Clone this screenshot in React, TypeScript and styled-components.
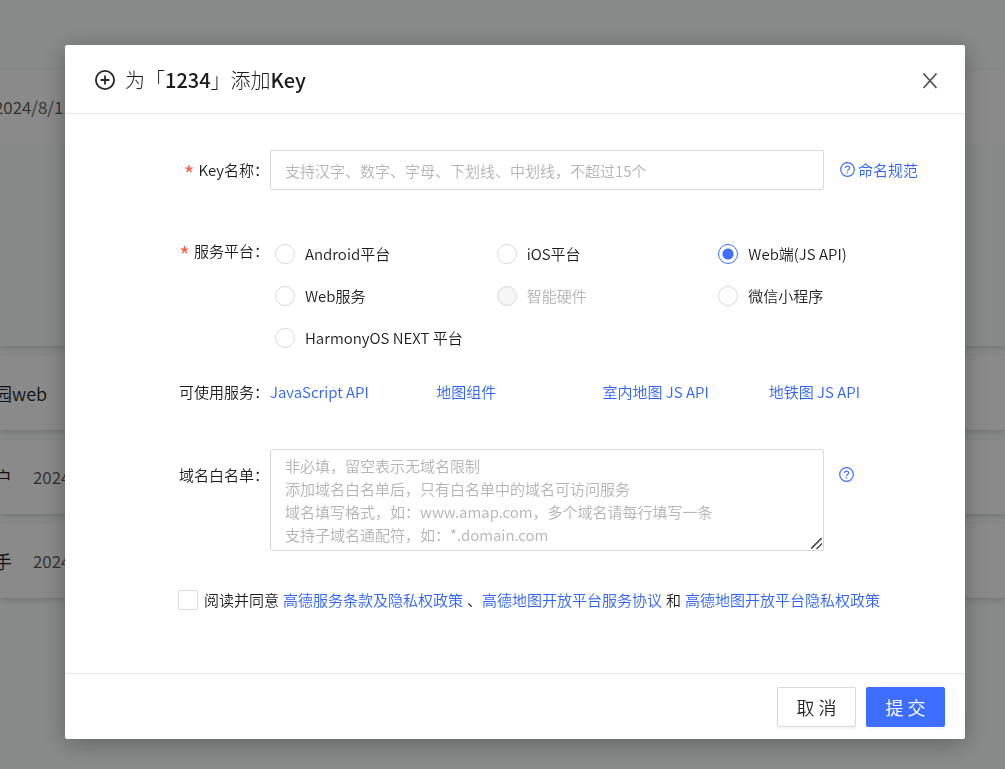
import React from "react";
import styled, { createGlobalStyle, css } from "styled-components";

const Global = createGlobalStyle`
  *, *::before, *::after { box-sizing: border-box; }
  html, body, #root { height: 100%; }
  body {
    margin: 0;
    overflow: hidden;
    font-family: "Noto Sans CJK SC", "Noto Sans", sans-serif;
    font-size: 15px;
    font-weight: 350;
    line-height: 22px;
    color: #1c1c1c;
    background: #f8fcfa;
  }
`;

const Page = styled.main`
  height: 100%;
  min-height: 768px;
  padding-top: 70px;
  overflow: hidden;
  display: flex;
  flex-direction: column;
  gap: 10px;
`;

const Card = styled.section`
  background: #fdfbfb;
  box-shadow: 0 2px 6px rgba(0, 0, 0, 0.16);
`;

const CardHead = styled.div`
  height: 74px;
  margin-left: -6px;
  display: flex;
  align-items: center;
  gap: 21px;
`;

const CardDetail = styled.div`
  height: 202px;
  background: #f4f9f7;
`;

const AppName = styled.span`
  font-size: 18px;
  color: #222;
`;

const AppDate = styled.span`
  font-size: 17px;
  color: #555;
`;

const Overlay = styled.div`
  position: fixed;
  inset: 0;
  padding: 45px 40px 30px 65px;
  background: rgba(0, 0, 0, 0.45);
  overflow: hidden;
`;

const Dialog = styled.div`
  background: #fff;
  border-radius: 2px;
  box-shadow: 0 4px 24px rgba(0, 0, 0, 0.3);
`;

const DialogHeader = styled.header`
  display: flex;
  align-items: center;
  height: 69px;
  padding: 2px 24px 0 29px;
  border-bottom: 1px solid #e8e8e8;
`;

const Title = styled.h2`
  flex: 1;
  margin: 0 0 0 9px;
  font-size: 20px;
  line-height: 28px;
  font-weight: 300;
`;

const Strong = styled.b`
  font-weight: 500;
`;

const CloseButton = styled.button`
  display: flex;
  padding: 0;
  border: 0;
  background: none;
  color: #555;
  cursor: pointer;
`;

const Form = styled.form`
  margin: 0;
`;

const Fields = styled.div`
  padding: 36px 0 62px;
`;

const Row = styled.div<{ $gap: number }>`
  display: grid;
  grid-template-columns: 205px minmax(0, 1fr) 141px;
  margin-bottom: ${(p) => p.$gap}px;
`;

const labelText = css<{ $top?: number }>`
  padding: ${(p) => p.$top ?? 0}px 1px 0 0;
  text-align: right;
`;

const Label = styled.label<{ $top?: number }>`
  ${labelText}
`;

const GroupLabel = styled.span<{ $top?: number }>`
  ${labelText}
`;

const Required = styled.span`
  margin-right: 4px;
  color: #ff5a3c;
  font-size: 24px;
  line-height: 16px;
  vertical-align: -8px;
`;

const field = css`
  display: block;
  width: 100%;
  border: 1px solid #d9d9d9;
  border-radius: 2px;
  background: #fff;
  font: inherit;
  color: inherit;
  &::placeholder {
    color: #b4b4b4;
    opacity: 1;
  }
`;

const TextInput = styled.input`
  ${field}
  height: 40px;
  padding: 0 14px;
`;

const TextArea = styled.textarea`
  ${field}
  height: 102px;
  padding: 4px 14px;
  line-height: 23px;
  overflow: hidden;
  &::-webkit-resizer {
    background: linear-gradient(
        135deg,
        transparent 44%,
        #555 45%,
        #555 54%,
        transparent 55%,
        transparent 70%,
        #555 71%,
        #555 80%,
        transparent 81%
      )
      3px 3px / 11px 11px no-repeat;
  }
`;

const Link = styled.a`
  color: #2f63ff;
  text-decoration: none;
`;

const HelpLink = styled(Link)<{ $top: number }>`
  display: flex;
  align-items: flex-start;
  gap: 3px;
  padding: ${(p) => p.$top}px 0 0 16px;
  svg {
    margin-top: 3px;
  }
`;

const HelpIconLink = styled(HelpLink)`
  padding-left: 15px;
`;

const Platforms = styled.div`
  grid-column: 2 / 4;
  display: grid;
  grid-template-columns: repeat(3, minmax(0, 1fr));
  grid-auto-rows: 42px;
  padding: 0 25px 0 5px;
`;

const Option = styled.label<{ $disabled?: boolean }>`
  display: flex;
  align-items: center;
  gap: 10px;
  color: ${(p) => (p.$disabled ? "#b4b4b4" : "inherit")};
`;

const Radio = styled.input`
  appearance: none;
  width: 20px;
  height: 20px;
  margin: 0;
  border: 1px solid #d9d9d9;
  border-radius: 50%;
  background: #fff;
  &:checked {
    border-color: #3d6eff;
    background: radial-gradient(circle, #3d6eff 5px, #fff 6px);
  }
  &:disabled {
    background: #f5f5f5;
  }
`;

const Services = styled.div`
  grid-column: 2 / 4;
  display: grid;
  grid-template-columns: repeat(4, minmax(0, 1fr));
  padding-right: 30px;
`;

const Agreement = styled.div`
  display: flex;
  align-items: center;
  gap: 6px;
  padding-left: 113px;
`;

const AgreementText = styled.div`
  display: flex;
  gap: 4px;
`;

const Checkbox = styled.input`
  appearance: none;
  width: 20px;
  height: 20px;
  margin: 0;
  border: 1px solid #d9d9d9;
  border-radius: 2px;
  background: #fff;
  &:checked {
    background: #3d6eff;
  }
`;

const DialogFooter = styled.footer`
  display: flex;
  justify-content: flex-end;
  gap: 10px;
  padding: 13px 20px 12px;
  border-top: 1px solid #e8e8e8;
`;

const Button = styled.button<{ $primary?: boolean }>`
  min-width: 79px;
  height: 40px;
  padding: 0 18px;
  border: 1px solid ${(p) => (p.$primary ? "#3d6eff" : "#d9d9d9")};
  border-radius: 2px;
  background: ${(p) => (p.$primary ? "#3d6eff" : "#fff")};
  color: ${(p) => (p.$primary ? "#fff" : "#262626")};
  box-shadow: 0 2px 2px rgba(0, 0, 0, 0.04);
  font: inherit;
  font-size: 18px;
  font-weight: ${(p) => (p.$primary ? 400 : 350)};
  cursor: pointer;
`;

const PlusCircle = () => (
  <svg width="22" height="22" viewBox="0 0 22 22" fill="none" stroke="#262626" strokeWidth="1.8">
    <circle cx="11" cy="11" r="9.1" />
    <path d="M11 6.6v8.8M6.6 11h8.8" />
  </svg>
);

const CloseIcon = () => (
  <svg width="22" height="22" viewBox="0 0 22 22" fill="none" stroke="currentColor" strokeWidth="1.8">
    <path d="M4.5 4.5l13 14.5M17.5 4.5l-13 14.5" />
  </svg>
);

const QuestionCircle = () => (
  <svg width="15" height="15" viewBox="0 0 15 15" fill="none" stroke="#3d6eff" strokeWidth="1.2">
    <circle cx="7.5" cy="7.5" r="6.8" />
    <path d="M5.4 6.1c0-1.2.9-2 2.1-2s2.1.8 2.1 1.9c0 1.5-2.1 1.5-2.1 3" />
    <path d="M7.5 10.1v1.3" />
  </svg>
);

const platforms = [
  { name: "Android平台" },
  { name: "iOS平台" },
  { name: "Web端(JS API)", checked: true },
  { name: "Web服务" },
  { name: "智能硬件", disabled: true },
  { name: "微信小程序" },
  { name: "HarmonyOS NEXT 平台" },
];

const services = ["JavaScript API", "地图组件", "室内地图 JS API", "地铁图 JS API"];

const whitelistHint = [
  "非必填，留空表示无域名限制",
  "添加域名白名单后，只有白名单中的域名可访问服务",
  "域名填写格式，如：www.amap.com，多个域名请每行填写一条",
  "支持子域名通配符，如：*.domain.com",
].join("\n");

export default function App() {
  return (
    <>
      <Global />
      <Page>
        <Card>
          <CardHead>
            <AppDate>2024/8/1</AppDate>
          </CardHead>
          <CardDetail />
        </Card>
        <Card>
          <CardHead>
            <AppName>园web</AppName>
          </CardHead>
        </Card>
        <Card>
          <CardHead>
            <AppName>户</AppName>
            <AppDate>2024</AppDate>
          </CardHead>
        </Card>
        <Card>
          <CardHead>
            <AppName>手</AppName>
            <AppDate>2024</AppDate>
          </CardHead>
        </Card>
      </Page>

      <Overlay>
        <Dialog role="dialog" aria-modal="true" aria-labelledby="dialog-title">
          <DialogHeader>
            <PlusCircle />
            <Title id="dialog-title">
              为「<Strong>1234</Strong>」添加<Strong>Key</Strong>
            </Title>
            <CloseButton type="button" aria-label="关闭">
              <CloseIcon />
            </CloseButton>
          </DialogHeader>
          <Form onSubmit={(e) => e.preventDefault()}>
            <Fields>
              <Row $gap={43}>
                <Label htmlFor="key-name" $top={9}>
                  <Required>*</Required>Key名称：
                </Label>
                <TextInput
                  id="key-name"
                  placeholder="支持汉字、数字、字母、下划线、中划线，不超过15个"
                />
                <HelpLink href="#naming" $top={9}>
                  <QuestionCircle />
                  命名规范
                </HelpLink>
              </Row>
              <Row $gap={22}>
                <GroupLabel id="platform-label" $top={7}>
                  <Required>*</Required>服务平台：
                </GroupLabel>
                <Platforms role="radiogroup" aria-labelledby="platform-label">
                  {platforms.map((p) => (
                    <Option key={p.name} $disabled={p.disabled}>
                      <Radio
                        type="radio"
                        name="platform"
                        defaultChecked={p.checked}
                        disabled={p.disabled}
                      />
                      {p.name}
                    </Option>
                  ))}
                </Platforms>
              </Row>
              <Row $gap={46}>
                <GroupLabel>可使用服务：</GroupLabel>
                <Services>
                  {services.map((s) => (
                    <Link key={s} href="#service">
                      {s}
                    </Link>
                  ))}
                </Services>
              </Row>
              <Row $gap={38}>
                <Label htmlFor="whitelist" $top={15}>
                  域名白名单：
                </Label>
                <TextArea id="whitelist" placeholder={whitelistHint} />
                <HelpIconLink href="#whitelist-help" $top={15}>
                  <QuestionCircle />
                </HelpIconLink>
              </Row>
              <Agreement>
                <Checkbox type="checkbox" id="agree" />
                <AgreementText>
                  <label htmlFor="agree">阅读并同意</label>
                  <Link href="#terms">高德服务条款及隐私权政策</Link>
                  <span>
                    、<Link href="#service-terms">高德地图开放平台服务协议</Link>
                  </span>
                  <span>和</span>
                  <Link href="#privacy">高德地图开放平台隐私权政策</Link>
                </AgreementText>
              </Agreement>
            </Fields>
            <DialogFooter>
              <Button type="button">取 消</Button>
              <Button type="submit" $primary>
                提 交
              </Button>
            </DialogFooter>
          </Form>
        </Dialog>
      </Overlay>
    </>
  );
}
